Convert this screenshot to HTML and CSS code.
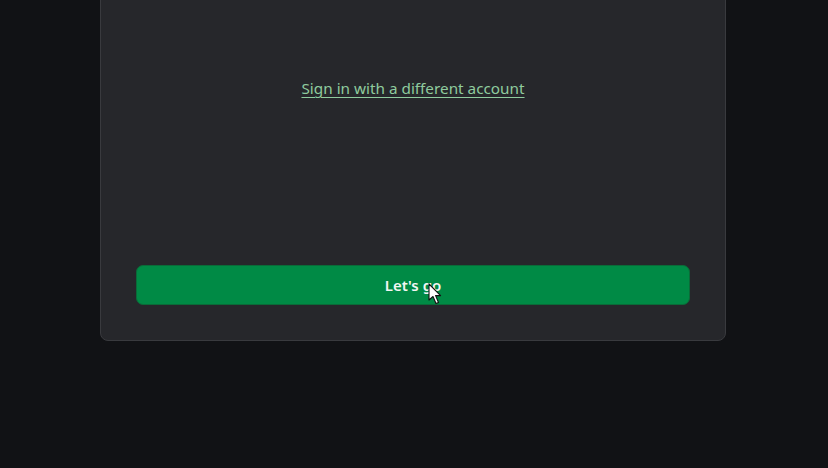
FILE: index.html
```html
<!DOCTYPE html>
<html>
<head>
<meta charset="utf-8">
<link rel="stylesheet" href="styles.css">
</head>
<body>
<div class="page">
  <div class="card">
    <div class="top">
      <a class="alt-link" href="#">Sign in with a different account</a>
    </div>
    <div class="actions">
      <button class="go">Let's go
        <svg class="cursor" width="16" height="22" viewBox="0 0 16 22"><path d="M1 1 L1 17 L5 13.5 L8 20.5 L10.5 19.5 L7.6 12.6 L12.6 12.6 Z" fill="#fff" stroke="#111" stroke-width="1.1" stroke-linejoin="round"/></svg>
      </button>
    </div>
  </div>
</div>
</body>
</html>
```
FILE: styles.css
```css
html, body {
  margin: 0;
  padding: 0;
  background: #111215;
  height: 100%;
  overflow: hidden;
}
.page {
  padding-left: 100px;
}
.card {
  box-sizing: border-box;
  width: 626px;
  height: 362px;
  margin-top: -21px;
  background: #26272b;
  border: 1px solid #393a3e;
  border-radius: 8px;
  display: flex;
  flex-direction: column;
  padding: 0 35px 35px;
}
.top {
  flex: 1;
  display: flex;
  justify-content: center;
  padding-top: 98px;
}
.alt-link {
  font-family: "Noto Sans", sans-serif;
  font-size: 15.3px;
  color: #8fcb9e;
  text-decoration: underline;
  text-underline-offset: 3px;
  line-height: 20px;
  height: 20px;
}
.actions {
  display: flex;
}
.go {
  position: relative;
  flex: 1;
  height: 40px;
  background: #008a45;
  border: 1px solid #0a6b38;
  border-radius: 7px;
  color: #f2f6f3;
  font-family: "Noto Sans", sans-serif;
  font-weight: 600;
  font-size: 15px;
  padding: 0;
}
.cursor {
  position: absolute;
  left: 291px;
  top: 17px;
}
```
